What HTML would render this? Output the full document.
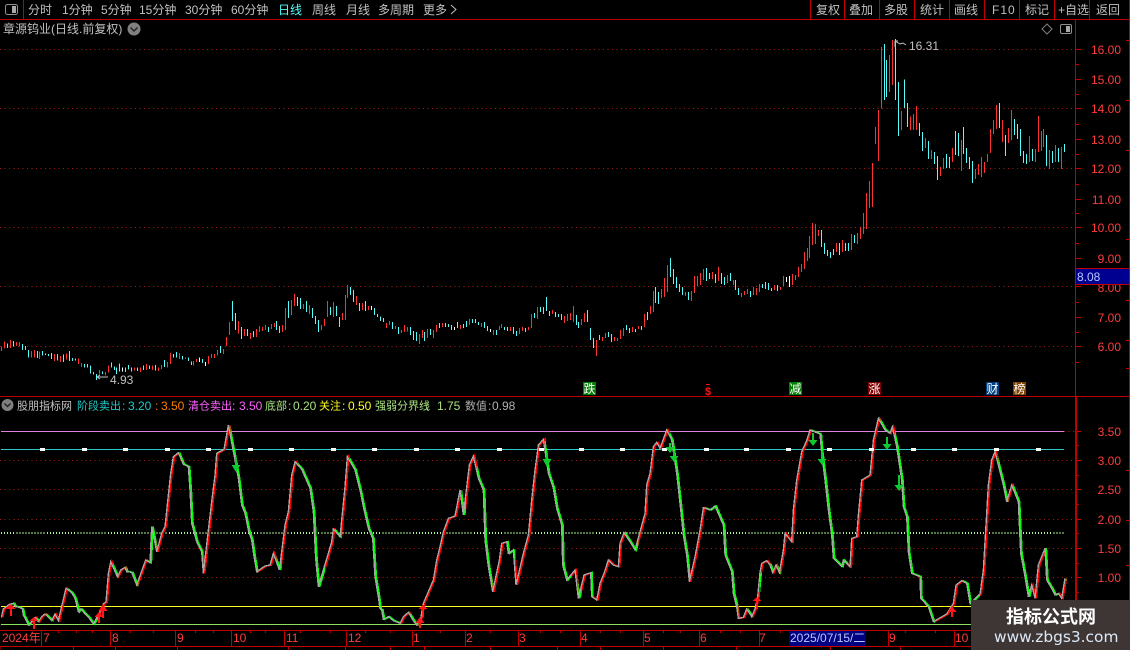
<!DOCTYPE html>
<html><head><meta charset="utf-8"><style>
html,body{margin:0;padding:0;background:#000;width:1130px;height:650px;overflow:hidden}
svg{display:block}
text{font-family:"Liberation Sans","WenQuanYi Zen Hei","Noto Sans CJK SC",sans-serif;font-size:12px;fill:#c0c0c0}
.r text,text.r{fill:#ff3c3c}
.c{fill:none;stroke-width:3}
</style></head><body>
<svg width="1130" height="650" viewBox="0 0 1130 650" xmlns="http://www.w3.org/2000/svg">
<rect width="1130" height="650" fill="#000"/>

<!-- grids -->
<g shape-rendering="crispEdges" fill="none">
<path d="M0 49.500H1075M0 108.500H1075M0 168.500H1075M0 227.500H1075M0 286.500H1075M0 346.500H1075M0 460.500H1075M0 489.500H1075M0 519.500H1075M0 548.500H1075M0 577.500H1075M1064 431.500H1075" stroke="#b01818" stroke-dasharray="1 3.500"/>
<path d="M1 431.500H1064" stroke="#e080e0"/>
<path d="M1 449.500H1064" stroke="#30c8c8"/>
<path d="M1 533H1064" stroke="#a8f090" stroke-width="2" stroke-dasharray="1 2.050"/>
<path d="M1 606.500H1064" stroke="#ffff20"/>
<path d="M1 624.500H1064" stroke="#90e060"/>
</g>

<!-- candles -->
<g shape-rendering="crispEdges">
<g transform="translate(0 270) scale(.33333)" class="c">
<path stroke="#ff3232" fill="none" d="M4 229V243M13 214V236M31 210V234M49 216V228M58 216V230M94 243V262M103 240V262M118 245V267M163 252V273M181 258V276M199 250V268M235 266V282M244 279V291M298 300V314M316 306V316M325 286V308M403 292V302M421 292V306M439 282V300M457 286V300M475 292V303M484 285V297M502 276V292M511 249V282M538 249V267M556 262V267M580 273V286M589 267V276M625 258V282M634 252V264M643 252V264M652 240V256M670 237V252M679 201V228M688 156V195M715 153V190M733 177V198M751 189V207M769 177V201M778 168V186M787 171V183M796 165V180M814 162V177M823 159V171M847 165V186M856 114V180M874 90V135M883 72V108M910 102V117M928 105V132M964 165V180M973 147V168M982 93V141M1000 96V141M1027 129V150M1036 75V150M1042 45V84M1069 78V105M1087 99V120M1105 108V120"/>
<path stroke="#54fcfc" fill="none" d="M22 220V234M40 213V230M67 222V240M76 228V240M85 240V262M112 243V264M127 243V256M136 250V255M145 252V258M154 249V267M172 252V272M190 253V276M208 243V273M217 264V273M226 266V272M253 282V293M262 282V292M271 286V310M280 306V314M289 312V330M307 304V312M334 277V293M343 289V300M349 292V312M358 280V304M376 293V306M385 285V298M394 292V304M412 292V303M430 286V300M448 286V297M466 285V301M493 270V291M520 252V263M529 246V262M547 258V268M565 262V273M574 274V285M607 267V279M661 228V249M697 93V153M706 129V180M724 171V207M742 177V198M760 183V201M805 171V186M829 153V180M838 168V189M865 93V144M892 81V108M901 84V117M919 93V126M937 114V144M946 138V162M955 150V186M991 111V135M1009 108V138M1018 141V171M1051 51V75M1060 60V96M1078 99V123M1096 93V123M1123 114V135M1132 132V141"/>
<path stroke="#fff" fill="none" d="M367 292V304M598 262V276M616 276V288M1114 108V120"/>
</g>
<g transform="translate(380 240) scale(.33333)" class="c">
<path stroke="#ff3232" fill="none" d="M19 249V264M28 243V255M46 258V267M64 270V279M73 255V276M82 261V274M118 282V312M127 270V294M142 267V294M160 270V294M169 255V276M187 249V261M241 255V267M268 237V255M304 249V261M340 270V285M358 258V270M364 252V264M391 261V273M418 264V282M427 261V273M445 261V270M454 222V264M472 201V237M517 210V222M553 228V249M562 222V243M571 219V240M580 198V246M604 237V255M613 219V246M649 300V348M667 291V303M676 279V294M703 291V303M712 294V303M721 270V297M730 264V288M757 261V276M775 258V267M793 222V261M811 198V222M820 153V216M844 147V174M853 114V171M862 75V156M916 156V168M934 153V183M943 108V159M952 108V138M961 99V135M970 87V120M997 96V117M1015 81V123M1042 105V129M1060 120V135M1084 159V171M1093 153V165M1102 147V162M1120 141V165M1129 144V165M1138 132V156M1183 135V150"/>
<path stroke="#54fcfc" fill="none" d="M1 229V243M10 234V246M37 246V267M55 261V282M91 261V285M100 273V300M109 276V303M133 276V303M151 267V285M178 249V264M196 249V261M205 252V261M214 255V270M232 246V264M250 252V264M259 243V261M277 237V249M286 237V249M295 246V255M313 246V264M322 258V273M349 270V285M373 261V270M382 261V273M400 261V282M409 273V288M436 264V276M463 219V234M481 201V216M490 201V222M499 171V213M508 213V228M526 216V231M535 222V231M544 222V240M589 225V255M595 246V264M622 210V246M631 264V300M640 294V324M658 285V300M685 276V291M694 282V306M739 255V270M748 264V279M766 267V276M784 258V270M802 216V240M826 141V189M835 156V192M871 54V111M880 87V132M889 111V144M898 132V156M907 141V165M925 156V180M979 84V123M988 99V117M1006 102V129M1024 99V132M1033 111V135M1051 99V123M1066 120V150M1075 144V165M1111 153V171M1147 132V144M1156 126V147M1165 129V150M1174 144V153M1192 135V153"/>
<path stroke="#fff" fill="none" d="M223 261V270M331 267V276"/>
</g>
<g transform="translate(780 120) scale(.33333)" class="c">
<path stroke="#ff3232" fill="none" d="M1 501V510M10 468V498M37 462V495M46 465V480M55 441V471M64 432V456M73 396V447M82 384V423M88 348V414M97 309V375M106 312V372M115 330V348M169 369V396M187 360V396M214 342V390M232 339V372M241 321V357M250 279V342M259 219V327M268 183V264M277 129V261M286 21V72M295 -30V123M304 -219V-35M328 -195V-84M337 -240V-105M364 -27V30M391 -10V30M400 -18V30M409 -42V30M436 54V84M454 90V117M481 141V168M490 114V147M517 84V126M544 60V153M586 147V177M595 132V165M604 111V171M613 126V159M622 102V126M631 27V99M640 0V42M649 -45V27M667 0V66M685 24V69M694 -30V60M748 48V126M766 87V126M775 -12V96M784 33V93M790 27V81M808 90V147M826 75V126M844 81V147"/>
<path stroke="#54fcfc" fill="none" d="M124 330V381M133 369V402M142 390V408M151 396V414M160 387V405M178 369V405M196 369V393M205 369V393M223 345V369M313 -228V-60M319 -180V-69M346 -243V-60M355 -114V48M373 -122V-36M382 -51V21M418 9V48M427 36V93M445 63V117M463 96V132M472 108V180M499 102V144M508 111V144M526 33V105M535 39V108M550 21V102M559 84V129M568 111V147M577 123V189M658 -51V24M676 45V108M703 -3V45M712 12V57M721 27V108M730 93V129M739 102V132M757 87V123M799 45V138M817 93V129M835 84V126M853 72V96"/>
<path stroke="#fff" fill="none" d="M19 471V486M28 468V501"/>
</g>
</g>

<!-- indicator curves -->
<defs>
<polyline id="p1" points="4,622 10,597 28,583 40,580 46,590 58,592 67,597 70,615 78,630 85,645 100,630 106,622 115,635 125,620 135,612 155,632 165,612 175,632 183,597 198,535 215,548 225,565 235,605 242,597 268,625 280,642 300,605 310,582 318,575 325,490 332,455 352,500 362,480 375,472 380,485 395,487 410,525 437,450 450,458 455,350 470,425 485,370 495,350 505,255 512,190 520,140 535,128 550,163 565,170 570,240 575,340 590,395 605,425 610,490 625,360 635,275 645,195 650,130 672,118 678,85 685,45 705,150 715,205 725,285 735,310 745,360 755,390 762,440 770,485 795,468 810,465 820,430 838,480 855,345 865,305 875,195 885,155 905,178 930,235 940,305 947,445 955,530 985,430 995,395 1000,357 1020,380 1035,230 1042,140 1065,180 1080,240 1090,290 1105,355 1118,385 1125,500 1135,560 1140,597"/>
<polyline id="p2" points="0,597 5,600 10,628 25,620 40,632 60,640 70,620 85,607 100,632 110,645 122,625 130,580 145,545 160,510 170,450 180,410 190,365 205,325 225,318 240,240 250,315 268,165 280,138 295,205 310,240 315,390 325,470 338,545 358,450 365,400 380,395 385,430 400,420 408,525 430,430 445,375 455,270 465,180 475,105 490,88 505,190 520,235 530,295 545,345 548,465 560,510 585,480 595,565 612,495 632,488 635,560 650,570 660,520 672,490 685,450 700,465 715,470 720,400 732,368 750,395 765,420 795,310 800,225 810,190 820,110 830,97 840,115 860,60 875,90 890,190 900,280 910,375 920,435 928,515 945,440 960,360 970,293 990,300 1005,288 1030,345 1035,435 1055,485 1060,550 1070,590 1075,625 1090,622 1100,597 1115,620 1125,597 1133,560 1140,487"/>
<polyline id="p3" points="30,487 35,460 50,452 60,465 68,488 78,465 88,488 100,420 105,370 125,395 130,300 140,210 155,125 170,92 180,60 210,72 215,130 225,210 235,300 245,375 250,445 275,470 280,450 300,470 305,385 320,380 325,315 335,210 360,195 370,90 385,25 405,60 420,70 427,50 440,110 455,210 460,290 470,320 475,425 485,490 510,500 512,565 535,590 550,635 590,612 610,580 618,525 635,512 650,520 660,580 690,552 700,480 715,225 725,150 735,125 760,225 770,275 785,225 805,275 812,430 825,500 835,560 845,525 855,565 865,465 885,415 890,510 905,535 915,555 925,550 935,565 945,505"/>
<clipPath id="r1"><path d="M0 0H30V700H0ZM95 0H112V700H95ZM118 0H140V700H118ZM160 0H205V700H160ZM295 0H340V700H295ZM355 0H380V700H355ZM415 0H445V700H415ZM470 0H540V700H470ZM610 0H692V700H610ZM775 0H830V700H775ZM845 0H895V700H845ZM975 0H1005V700H975ZM1025 0H1050V700H1025Z"/></clipPath>
<clipPath id="r2"><path d="M60 0H92V700H60ZM115 0H245V700H115ZM258 0H292V700H258ZM338 0H382V700H338ZM405 0H495V700H405ZM575 0H595V700H575ZM605 0H632V700H605ZM640 0H735V700H640ZM775 0H870V700H775ZM930 0H975V700H930ZM1075 0H1105V700H1075ZM1118 0H1140V700H1118Z"/></clipPath>
<clipPath id="r3"><path d="M0 0H62V700H0ZM70 0H85V700H70ZM92 0H185V700H92ZM295 0H392V700H295ZM418 0H435V700H418ZM555 0H640V700H555ZM690 0H745V700H690ZM775 0H790V700H775ZM845 0H885V700H845ZM925 0H950V700H925Z"/></clipPath>
</defs>
<g shape-rendering="crispEdges" fill="none">
<g transform="translate(0 410) scale(.33333)">
<use href="#p1" stroke="#00ff00" stroke-width="5" transform="translate(4 0)"/>
<g clip-path="url(#r1)"><use href="#p1" stroke="#ff0000" stroke-width="5" transform="translate(4 0)"/></g>
<use href="#p1" stroke="#a8a8a8" stroke-width="4"/>
</g>
<g transform="translate(380 410) scale(.33333)">
<use href="#p2" stroke="#00ff00" stroke-width="5" transform="translate(4 0)"/>
<g clip-path="url(#r2)"><use href="#p2" stroke="#ff0000" stroke-width="5" transform="translate(4 0)"/></g>
<use href="#p2" stroke="#a8a8a8" stroke-width="4"/>
</g>
<g transform="translate(750 410) scale(.33333)">
<use href="#p3" stroke="#00ff00" stroke-width="5" transform="translate(4 0)"/>
<g clip-path="url(#r3)"><use href="#p3" stroke="#ff0000" stroke-width="5" transform="translate(4 0)"/></g>
<use href="#p3" stroke="#a8a8a8" stroke-width="4"/>
</g>
</g>

<!-- white squares -->
<g fill="#fff" shape-rendering="crispEdges">
<path d="M40 448h5v3h-5zM82 448h5v3h-5zM123 448h5v3h-5zM165 448h5v3h-5zM206 448h5v3h-5zM248 448h5v3h-5zM289 448h5v3h-5zM331 448h5v3h-5zM372 448h5v3h-5zM414 448h5v3h-5zM455 448h5v3h-5zM497 448h5v3h-5zM539 448h5v3h-5zM579 448h5v3h-5zM620 448h5v3h-5zM662 448h5v3h-5zM704 448h5v3h-5zM744 448h5v3h-5zM786 448h5v3h-5zM827 448h5v3h-5zM869 448h5v3h-5zM911 448h5v3h-5zM952 448h5v3h-5zM994 448h5v3h-5zM1036 448h5v3h-5z"/>
</g>

<!-- arrows -->
<path fill="#ff1818" d="M11 604L15.500 609H12V616H10V609H6.500ZM34 617L38.500 621H35V629H33V621H29.500ZM99 612L103.500 617H100V623H98V617H94.500ZM103 604L107.500 611H104V618H102V611H98.500ZM420 617L424.500 623H421V628H419V623H415.500ZM423 605L427.500 609H424V617H422V609H418.500ZM757 597L761.500 601H758V609H756V601H752.500ZM952 606L956.500 612H953V617H951V612H947.500Z"/>
<path fill="#10c830" d="M236 472L240.500 465H237V458H235V465H231.500ZM547 467L551.500 459H548V453H546V459H542.500ZM670 453L674.500 447H671V443H669V447H665.500ZM674 462L678.500 456H675V451H673V456H669.500ZM813 446L817.500 440H814V433H812V440H808.500ZM822 465L826.500 459H823V451H821V459H817.500ZM887 450L891.500 444H888V437H886V444H882.500ZM899 491L903.500 485H900V475H898V485H894.500Z"/>

<!-- frame lines -->
<g fill="none" stroke="#c00000" shape-rendering="crispEdges">
<path d="M0 19.500H1130M23.500 0V19M810.500 0V19M844.500 0V19M879.500 0V19M914.500 0V19M949.500 0V19M984.500 0V19M1019.500 0V19M1054.500 0V19M1089.500 0V19M1129.500 0V650"/>
<path d="M0 396.500H1130M0 630.500H1075M0 646.500H1075M1075.500 19V630"/>
<path d="M1076.500 396V650"/>
<path d="M41.500 631V646M110.500 631V646M175.500 631V646M231.500 631V646M284.500 631V646M346.500 631V646M412.500 631V646M465.500 631V646M518.500 631V646M580.500 631V646M643.500 631V646M699.500 631V646M759.500 631V646M888.500 631V646M954.500 631V646"/>
<path d="M58.500 631V633M76.500 631V633M92.500 631V633M130.500 631V633M153.500 631V633M195.500 631V633M213.500 631V633M250.500 631V633M265.500 631V633M300.500 631V633M330.500 631V633M365.500 631V633M390.500 631V633M440.500 631V633M490.500 631V633M540.500 631V633M560.500 631V633M600.500 631V633M620.500 631V633M663.500 631V633M680.500 631V633M720.500 631V633M740.500 631V633M780.500 631V633M905.500 631V633M935.500 631V633"/>
<path d="M0 646V650M73.500 646V650M115.500 646V650M177.500 646V650M288.500 646V650M345.500 646V650M390.500 646V650M424.500 646V650M490.500 646V650M557.500 646V650M600.500 646V650M663.500 646V650M736.500 646V650M830.500 646V650M900.500 646V650"/>
<path d="M1075 49.500H1081M1075 79.500H1081M1075 108.500H1081M1075 139.500H1081M1075 168.500H1081M1075 199.500H1081M1075 227.500H1081M1075 258.500H1081M1075 286.500H1081M1075 317.500H1081M1075 346.500H1081M1075 431.500H1081M1075 460.500H1081M1075 489.500H1081M1075 519.500H1081M1075 548.500H1081M1075 577.500H1081"/>
<path d="M1075 64.500H1079M1075 94.500H1079M1075 124.500H1079M1075 154.500H1079M1075 184.500H1079M1075 213.500H1079M1075 243.500H1079M1075 272.500H1079M1075 302.500H1079M1075 332.500H1079M1075 362.500H1079M1075 445.500H1079M1075 475.500H1079M1075 504.500H1079M1075 533.500H1079M1075 563.500H1079M1075 592.500H1079"/>
<path d="M1126 40.500H1129M1126 100.500H1129M1126 150.500H1129M1126 239.500H1129M1126 270.500H1129M1126 300.500H1129M1126 340.500H1129M1126 368.500H1129M1126 470.500H1129M1126 520.500H1129M1126 565.500H1129"/>
</g>

<!-- date box -->
<rect x="789" y="631" width="77" height="15" fill="#000080"/>
<text x="790" y="642" style="fill:#b8c8ff;font-size:12px">2025/07/15/二</text>

<!-- x labels -->
<g style="font-size:12px">
<text x="2" y="642" class="r">2024年</text>
<text x="43" y="642" class="r">7</text><text x="112" y="642" class="r">8</text><text x="177" y="642" class="r">9</text><text x="233" y="642" class="r">10</text><text x="286" y="642" class="r">11</text><text x="348" y="642" class="r">12</text><text x="413" y="642" class="r">1</text><text x="466" y="642" class="r">2</text><text x="519" y="642" class="r">3</text><text x="581" y="642" class="r">4</text><text x="644" y="642" class="r">5</text><text x="700" y="642" class="r">6</text><text x="759" y="642" class="r">7</text><text x="889" y="642" class="r">9</text><text x="955" y="642" class="r">10</text>
</g>

<!-- top bar -->
<rect x="5.500" y="4.500" width="12" height="10" rx="2" fill="none" stroke="#909090"/>
<rect x="12" y="6" width="4" height="7" fill="#a8a8a8"/>
<g>
<text x="28" y="14">分时</text><text x="62" y="14">1分钟</text><text x="101" y="14">5分钟</text><text x="139" y="14">15分钟</text><text x="185" y="14">30分钟</text><text x="231" y="14">60分钟</text>
<text x="278" y="14" style="fill:#54fcfc">日线</text>
<text x="312" y="14">周线</text><text x="346" y="14">月线</text><text x="378" y="14">多周期</text><text x="423" y="14">更多</text>
<path d="M451 5l5 4.500-5 4.500" fill="none" stroke="#c0c0c0"/>
<text x="816" y="14">复权</text><text x="849" y="14">叠加</text><text x="884" y="14">多股</text><text x="920" y="14">统计</text><text x="954" y="14">画线</text><text x="992" y="14" style="letter-spacing:1px">F10</text><text x="1025" y="14">标记</text><text x="1058" y="14">+自选</text><text x="1096" y="14">返回</text>
</g>

<!-- title -->
<text x="3" y="33">章源钨业(日线.前复权)</text>
<circle cx="134" cy="29" r="6.500" fill="#808080"/>
<path d="M130.500 27.500l3.500 3.500 3.500-3.500" fill="none" stroke="#222" stroke-width="1.400"/>
<path d="M1047 24l5 5-5 5-5-5z" fill="none" stroke="#808080"/>
<rect x="1060.500" y="24.500" width="11" height="9" rx="1.500" fill="none" stroke="#909090"/>
<rect x="1066" y="26" width="4" height="6" fill="#a8a8a8"/>

<!-- price annotations -->
<path d="M895 47v-6h3M895 41l5 3 3-1 3 2" fill="none" stroke="#c0c0c0"/>
<text x="909" y="50">16.31</text>
<path d="M97 377h11M97 377l3-2M97 377l3 2" fill="none" stroke="#c0c0c0"/>
<text x="110" y="384">4.93</text>

<!-- y axis labels -->
<g text-anchor="end">
<text x="1121" y="54" class="r">16.00</text><text x="1121" y="84" class="r">15.00</text><text x="1121" y="113" class="r">14.00</text><text x="1121" y="144" class="r">13.00</text><text x="1121" y="173" class="r">12.00</text><text x="1121" y="204" class="r">11.00</text><text x="1121" y="232" class="r">10.00</text><text x="1121" y="263" class="r">9.00</text><text x="1121" y="292" class="r">8.00</text><text x="1121" y="322" class="r">7.00</text><text x="1121" y="351" class="r">6.00</text>
<text x="1121" y="436" class="r">3.50</text><text x="1121" y="465" class="r">3.00</text><text x="1121" y="494" class="r">2.50</text><text x="1121" y="524" class="r">2.00</text><text x="1121" y="553" class="r">1.50</text><text x="1121" y="582" class="r">1.00</text>
</g>
<rect x="1075.500" y="268.500" width="54" height="16" fill="#000090" stroke="#c00000" shape-rendering="crispEdges"/>
<text x="1077" y="281" style="fill:#b8c8ff">8.08</text>

<!-- badges -->
<g shape-rendering="crispEdges">
<rect x="583" y="382" width="13" height="13" fill="#008000"/>
<rect x="789" y="382" width="13" height="13" fill="#008000"/>
<rect x="868" y="382" width="13" height="13" fill="#800000"/>
<rect x="986" y="382" width="13" height="13" fill="#004080"/>
<rect x="1013" y="382" width="13" height="13" fill="#804000"/>
</g>
<g style="font-size:12px">
<text x="583.500" y="393" style="fill:#fff">跌</text>
<text x="789.500" y="393" style="fill:#fff">减</text>
<text x="868.500" y="393" style="fill:#fff">涨</text>
<text x="986.500" y="393" style="fill:#fff">财</text>
<text x="1013.500" y="393" style="fill:#fff">榜</text>
<text x="705" y="395" style="fill:#ff1010;font-weight:bold;font-size:11px">$</text>
</g>
<rect x="706" y="384" width="4" height="1" fill="#ff1010"/>

<!-- legend -->
<circle cx="7.500" cy="405" r="6" fill="#808080"/>
<path d="M4.500 403.500l3 3 3-3" fill="none" stroke="#222" stroke-width="1.400"/>
<text x="17" y="409.500" style="font-size:11px">股朋指标网</text>
<g style="font-size:11.500px">
<text x="77" y="409.500" style="fill:#20c8c8;font-size:11px">阶段卖出</text><text x="122" y="410" style="fill:#20c8c8">:</text><text x="128" y="410" style="fill:#20c8c8">3.20</text>
<text x="155" y="410" style="fill:#ff8000">:</text><text x="161" y="410" style="fill:#ff8000">3.50</text>
<text x="188" y="409.500" style="fill:#ff60ff;font-size:11px">清仓卖出</text><text x="232" y="410" style="fill:#ff60ff">:</text><text x="239" y="410" style="fill:#ff60ff">3.50</text>
<text x="265" y="409.500" style="fill:#a8e080;font-size:11px">底部</text><text x="288" y="410" style="fill:#a8e080">:</text><text x="293" y="410" style="fill:#a8e080">0.20</text>
<text x="319" y="409.500" style="fill:#ffff20;font-size:11px">关注</text><text x="342" y="410" style="fill:#ffff20">:</text><text x="348" y="410" style="fill:#ffff20">0.50</text>
<text x="375" y="409.500" style="fill:#a8e080;font-size:11px">强弱分界线</text><text x="426" y="410" style="fill:#a8e080">:</text><text x="437" y="410" style="fill:#a8e080">1.75</text>
<text x="465" y="409.500" style="fill:#b0b0b0;font-size:11px">数值</text><text x="488" y="410" style="fill:#b0b0b0">:</text><text x="492" y="410" style="fill:#b0b0b0">0.98</text>
</g>

<!-- watermark -->
<rect x="971" y="600" width="159" height="50" fill="#3e3634"/>
<text x="1006" y="623" style="fill:#fff;font-size:18px;font-weight:bold">指标公式网</text>
<text x="994" y="642" style="fill:#dce8f8;font-family:'DejaVu Sans',sans-serif;font-size:15.400px">www.zbgs3.com</text>
</svg>
</body></html>
